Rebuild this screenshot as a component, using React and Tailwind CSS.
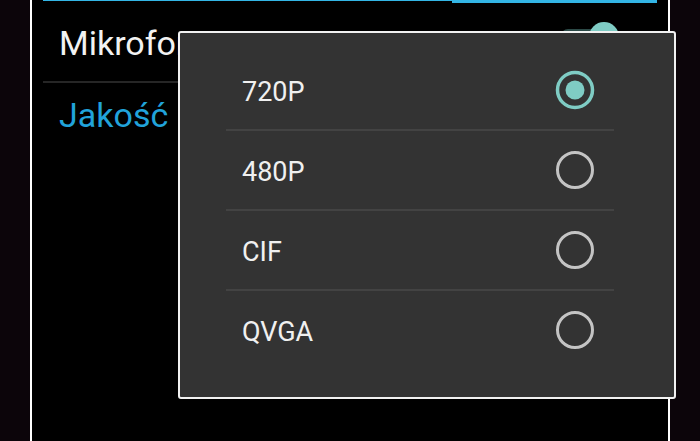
import React from 'react';

const options = ['720P', '480P', 'CIF', 'QVGA'];

const Radio = ({ checked }) => (
  <svg width="40" height="40" viewBox="0 0 40 40">
    {checked ? (
      <>
        <circle cx="20" cy="20" r="17.5" fill="none" stroke="#7fccc4" strokeWidth="3.5" />
        <circle cx="20" cy="20" r="9.5" fill="#7fccc4" />
      </>
    ) : (
      <circle cx="20" cy="20" r="17.5" fill="none" stroke="#c4c4c4" strokeWidth="3" />
    )}
  </svg>
);

const App = () => {
  return (
    <div
      className="relative w-[700px] h-[441px] overflow-hidden bg-[#0c050a] flex"
      style={{ fontFamily: 'Roboto, "Noto Sans", sans-serif' }}
    >
      <div className="w-[30px] shrink-0" />

      {/* settings screen */}
      <div className="w-[640px] h-full bg-black border-x-2 border-white px-[11px]">
        <div className="flex items-start">
          <div className="w-[409px] h-px bg-[#33b5e5]" />
          <div className="flex-1 h-[3px] bg-[#33b5e5]" />
        </div>

        <div className="relative h-[78px] flex items-center pl-4">
          <span className="text-[34px] text-[#f2f2f2] leading-none mt-[2px]">Mikrofon</span>
          <div className="absolute right-[40px] top-[26px] flex items-center">
            <div className="w-[56px] h-[14px] rounded-full bg-[#2c4a47]" />
            <div className="absolute right-[-2px] top-[-7px] w-[30px] h-[30px] rounded-full bg-[#7fccc4]" />
          </div>
        </div>
        <div className="h-[2px] bg-[#262626]" />

        <div className="pl-4 pt-[15px]">
          <span className="text-[34px] text-[#21a3da] leading-none">Jakość</span>
        </div>
      </div>

      {/* dialog */}
      <div className="absolute left-[178px] top-[31px] w-[498px] h-[368px] bg-[#333333] border-2 border-[#f2f2f2] rounded-[3px] pt-[18px] pl-[46px] pr-[60px]">
        {options.map((opt, i) => (
          <div key={opt}>
            {i > 0 && <div className="h-[2px] bg-[#434343]" />}
            <div className="h-[78px] flex items-center justify-between pl-4 pr-[19px]">
              <span className="text-[27px] text-[#f0f0f0] leading-none mt-[4px]">{opt}</span>
              <Radio checked={i === 0} />
            </div>
          </div>
        ))}
      </div>
    </div>
  );
};

export default App;
